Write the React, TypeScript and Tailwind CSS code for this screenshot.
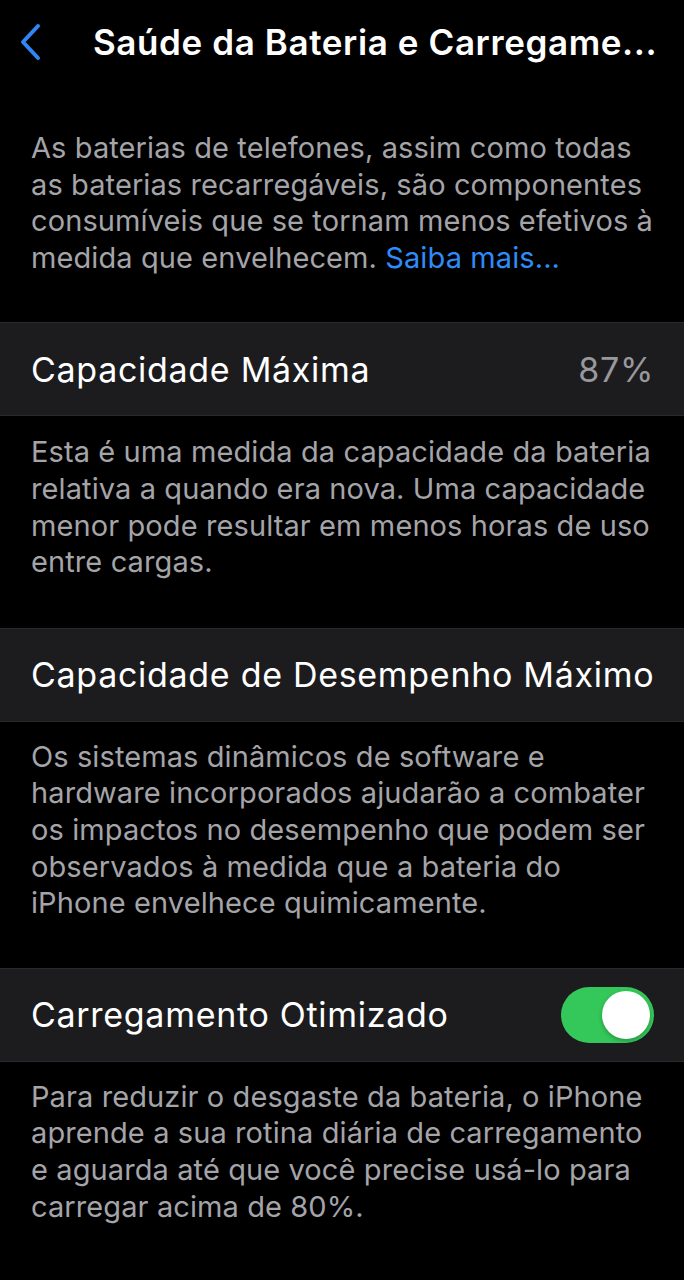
import React from "react";

const font = { fontFamily: "Inter, 'Noto Sans', sans-serif" };

function Desc({ children }: { children: React.ReactNode }) {
  return (
    <p className="pl-[31px] pr-[29px] text-[29px] leading-[36.6px] text-[#a4a4a9] tracking-[0.1px]">
      {children}
    </p>
  );
}

function Row({ children }: { children: React.ReactNode }) {
  return (
    <div className="h-[94px] bg-[#1c1c1e] border-y border-[#2a2a2c] flex items-center justify-between pl-[31px] pr-[30px]">
      {children}
    </div>
  );
}

export default function App() {
  return (
    <div className="w-[684px] h-[1280px] bg-black text-white overflow-hidden" style={font}>
      <div className="h-[84px] flex items-center">
        <div className="w-[93px] pl-[16px] flex items-center">
          <svg width="30" height="40" viewBox="0 0 30 40" fill="none">
            <path d="M22 4 L7 20 L22 36" stroke="#2f86f6" strokeWidth="4" strokeLinecap="round" strokeLinejoin="round" />
          </svg>
        </div>
        <div className="text-[35px] font-semibold tracking-[0.6px] whitespace-nowrap">Saúde da Bateria e Carregame...</div>
      </div>
      <div className="pt-[46px]">
        <Desc>
          As baterias de telefones, assim como todas as baterias recarregáveis, são componentes consumíveis que se tornam menos efetivos à medida que envelhecem. <span className="text-[#2f8bf7]">Saiba mais...</span>
        </Desc>
      </div>
      <div className="mt-[46px]">
        <Row>
          <span className="text-[34px] tracking-[0.7px]">Capacidade Máxima</span>
          <span className="text-[34px] tracking-[0.7px] text-[#98989d]">87%</span>
        </Row>
      </div>
      <div className="pt-[18px]">
        <Desc>
          Esta é uma medida da capacidade da bateria relativa a quando era nova. Uma capacidade menor pode resultar em menos horas de uso entre cargas.
        </Desc>
      </div>
      <div className="mt-[47px]">
        <Row>
          <span className="text-[34px] tracking-[0.7px] whitespace-nowrap">Capacidade de Desempenho Máximo</span>
        </Row>
      </div>
      <div className="pt-[17px]">
        <Desc>
          Os sistemas dinâmicos de software e hardware incorporados ajudarão a combater os impactos no desempenho que podem ser observados à medida que a bateria do iPhone envelhece quimicamente.
        </Desc>
      </div>
      <div className="mt-[46px]">
        <Row>
          <span className="text-[34px] tracking-[0.7px]">Carregamento Otimizado</span>
          <div className="w-[93px] h-[56px] rounded-full bg-[#34c759] flex items-center justify-end p-[4px]">
            <div className="w-[48px] h-[48px] rounded-full bg-white shadow-[0_2px_4px_rgba(0,0,0,0.25)]" />
          </div>
        </Row>
      </div>
      <div className="pt-[17px]">
        <Desc>
          Para reduzir o desgaste da bateria, o iPhone aprende a sua rotina diária de carregamento e aguarda até que você precise usá-lo para carregar acima de 80%.
        </Desc>
      </div>
    </div>
  );
}
